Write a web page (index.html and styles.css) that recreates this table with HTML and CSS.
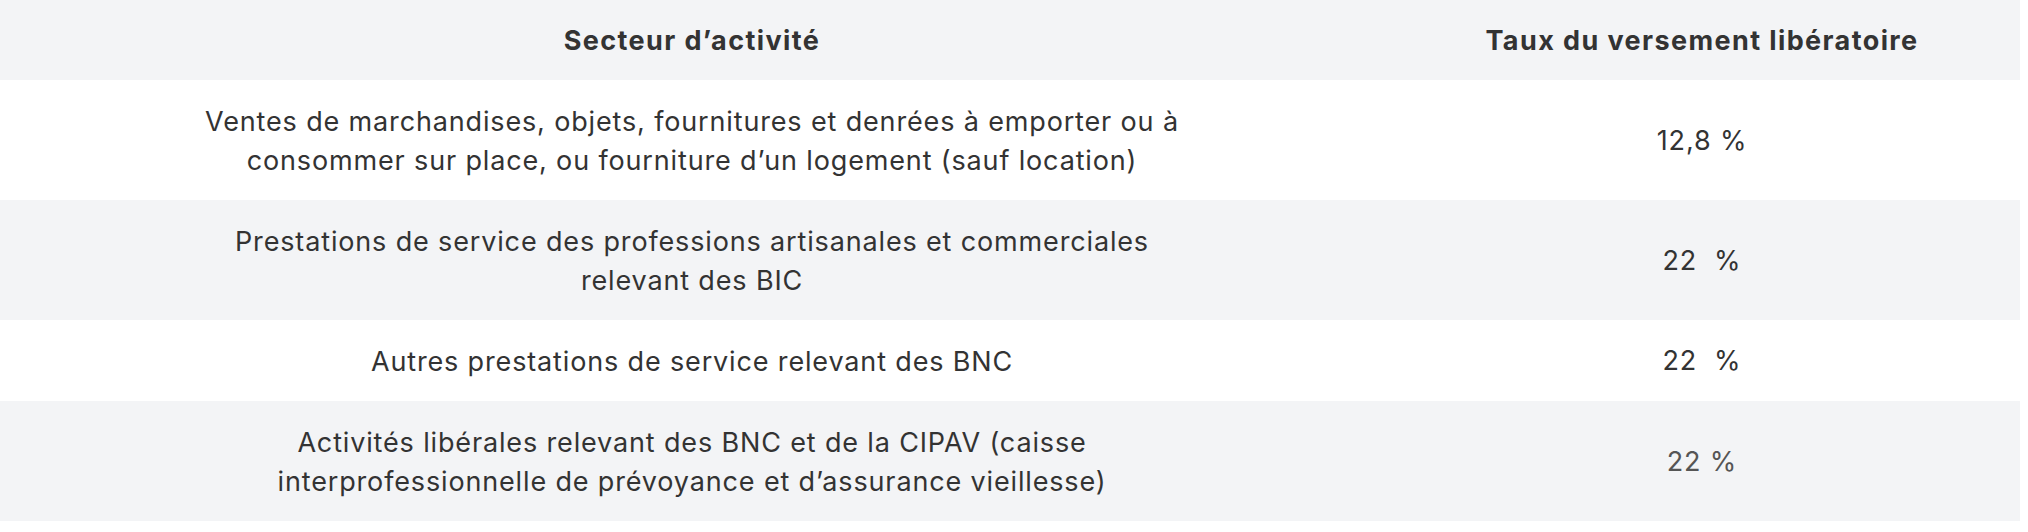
FILE: index.html
```html
<!DOCTYPE html>
<html lang="fr">
<head>
<meta charset="utf-8">
<title>Taux du versement libératoire</title>
<link rel="stylesheet" href="styles.css">
</head>
<body>
<table class="rates">
  <colgroup>
    <col class="col-sector">
    <col class="col-rate">
  </colgroup>
  <thead>
    <tr>
      <th>Secteur d’activité</th>
      <th>Taux du versement libératoire</th>
    </tr>
  </thead>
  <tbody>
    <tr>
      <td class="sector"><div class="sector-text">Ventes de marchandises, objets, fournitures et denrées à emporter ou à consommer sur place, ou fourniture d’un logement (sauf location)</div></td>
      <td class="rate">12,8 %</td>
    </tr>
    <tr>
      <td class="sector"><div class="sector-text">Prestations de service des professions artisanales et commerciales relevant des BIC</div></td>
      <td class="rate">22&nbsp; %</td>
    </tr>
    <tr>
      <td class="sector"><div class="sector-text">Autres prestations de service relevant des BNC</div></td>
      <td class="rate">22&nbsp; %</td>
    </tr>
    <tr>
      <td class="sector"><div class="sector-text">Activités libérales relevant des BNC et de la CIPAV (caisse interprofessionnelle de prévoyance et d’assurance vieillesse)</div></td>
      <td class="rate rate-muted">22 %</td>
    </tr>
  </tbody>
</table>
</body>
</html>
```
FILE: styles.css
```css
html, body {
  margin: 0;
  padding: 0;
  background: #ffffff;
}

body {
  font-family: Inter, "Liberation Sans", sans-serif;
  color: #333333;
}

.rates {
  width: 2020px;
  border-collapse: collapse;
  table-layout: fixed;
}

.col-sector {
  width: 1384px;
}

.col-rate {
  width: 636px;
}

.rates th {
  height: 80px;
  padding: 0;
  background: #f3f4f6;
  font-size: 27px;
  font-weight: 700;
  letter-spacing: 1.4px;
  line-height: 39px;
  text-align: center;
  vertical-align: middle;
  color: #333333;
}

.rates td {
  padding: 22px 0 20px;
  font-size: 27px;
  letter-spacing: 0.85px;
  line-height: 39px;
  text-align: center;
  vertical-align: middle;
}

.rates td.rate {
  padding: 21px 0;
}

.rates tbody tr:nth-child(even) {
  background: #f3f4f6;
}

.rates tbody tr:nth-child(odd) {
  background: #ffffff;
}

.sector-text {
  max-width: 1010px;
  margin: 0 auto;
}

.rate-muted {
  color: #555555;
  letter-spacing: 0.2px;
}
```
